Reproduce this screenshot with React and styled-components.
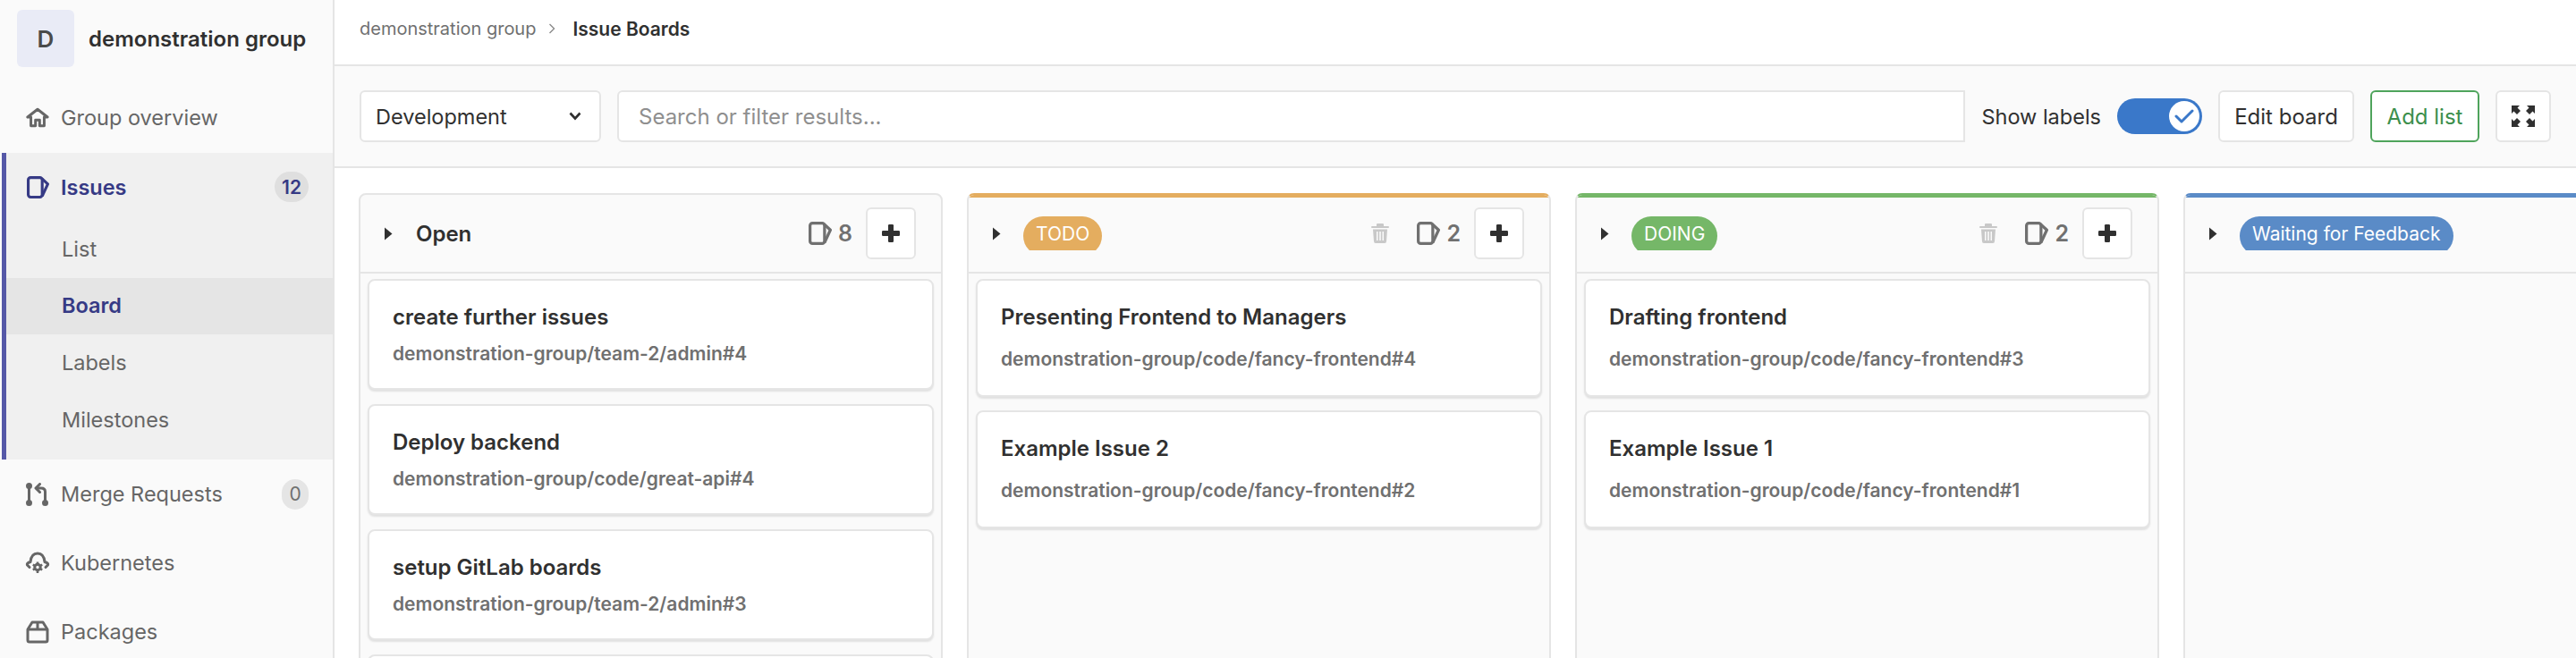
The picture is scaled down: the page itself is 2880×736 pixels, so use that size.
import React from 'react'
import styled, { createGlobalStyle } from 'styled-components'

const GlobalStyle = createGlobalStyle`
    html, body {
        margin: 0;
        padding: 0;
        height: 100%;
        overflow: hidden;
        background: #fff;
    }
    * {
        box-sizing: border-box;
    }
    body {
        font-family: Inter, "Noto Sans", sans-serif;
        color: #303030;
    }
`;

const IssueIcon = ({ size = 26 }) => (
    <svg width={size} height={size} viewBox="0 0 24 24" fill="none" stroke="currentColor" strokeWidth="3" strokeLinejoin="round">
        <rect x="1.5" y="1.5" width="15" height="21" rx="2.5"/>
        <path d="M16 2.5 L22.5 8.5 L16.5 21.5"/>
    </svg>
)

const HomeIcon = () => (
    <svg width="26" height="23" viewBox="0 0 28 24" fill="none" stroke="currentColor" strokeWidth="3.2" strokeLinejoin="round">
        <path d="M14 2 L2 11.5 H6 V22 H11.5 V15 H16.5 V22 H22 V11.5 H26 Z"/>
    </svg>
)

const MergeIcon = () => (
    <svg width="26" height="26" viewBox="0 0 26 26" fill="none" stroke="currentColor" strokeWidth="3" strokeLinecap="round" strokeLinejoin="round">
        <path d="M3.5 4 V22"/>
        <circle cx="3.5" cy="3.5" r="2" fill="currentColor"/>
        <circle cx="3.5" cy="22.5" r="2" fill="currentColor"/>
        <circle cx="21.5" cy="22.5" r="2" fill="currentColor"/>
        <path d="M21.5 22 V10 Q21.5 6 17 6 H12"/>
        <path d="M15.5 1.5 L11 6 L15.5 10.5"/>
    </svg>
)

const KubeIcon = () => (
    <svg width="28" height="26" viewBox="0 0 28 26" fill="none">
        <path d="M5 17.5 L2.5 15 Q2 13.5 3.5 12.5 L6 11.5 Q7 2 14 2 Q21 2 22 11.5 L24.5 12.5 Q26 13.5 25.5 15 L23 17.5" stroke="currentColor" strokeWidth="3" strokeLinecap="round" strokeLinejoin="round"/>
        <circle cx="14" cy="17.5" r="3.2" stroke="currentColor" strokeWidth="3"/>
        <path d="M14 11.5 V14 M14 21 V24 M8.8 14.5 L11 15.8 M17 19.2 L19.2 20.5 M8.8 20.5 L11 19.2 M17 15.8 L19.2 14.5" stroke="currentColor" strokeWidth="2.6"/>
    </svg>
)

const PackageIcon = () => (
    <svg width="26" height="26" viewBox="0 0 26 26" fill="none" stroke="currentColor" strokeWidth="3" strokeLinejoin="round">
        <path d="M7 2 H19 L24 10 V22 A2 2 0 0 1 22 24 H4 A2 2 0 0 1 2 22 V10 Z"/>
        <path d="M2 10 H24"/>
        <path d="M13 2 V10"/>
    </svg>
)

const TrashIcon = () => (
    <svg width="20" height="22" viewBox="0 0 20 22" fill="#c8c8c8">
        <path d="M7 0 H13 A1 1 0 0 1 14 1 V3 H19 A1 1 0 0 1 19 5 H1 A1 1 0 0 1 1 3 H6 V1 A1 1 0 0 1 7 0 Z"/>
        <path d="M2 6.5 H18 L17 20 A2 2 0 0 1 15 22 H5 A2 2 0 0 1 3 20 Z M6 9 V19 H7.5 V9 Z M9.2 9 V19 H10.8 V9 Z M12.5 9 V19 H14 V9 Z" fillRule="evenodd"/>
    </svg>
)

const PlusIcon = () => (
    <svg width="20" height="20" viewBox="0 0 20 20" fill="#303030">
        <rect x="7" y="0" width="6" height="20" rx="1.2"/>
        <rect x="0" y="7" width="20" height="6" rx="1.2"/>
    </svg>
)

const ExpandIcon = () => (
    <svg width="26" height="24" viewBox="0 0 26 24" fill="#303030">
        <path d="M0 0 H9 L6.5 2.5 L10 6 L6 10 L2.5 6.5 L0 9 Z"/>
        <path d="M26 0 H17 L19.5 2.5 L16 6 L20 10 L23.5 6.5 L26 9 Z"/>
        <path d="M0 24 H9 L6.5 21.5 L10 18 L6 14 L2.5 17.5 L0 15 Z"/>
        <path d="M26 24 H17 L19.5 21.5 L16 18 L20 14 L23.5 17.5 L26 15 Z"/>
    </svg>
)

const Triangle = () => (
    <svg width="9" height="15" viewBox="0 0 9 15" fill="#303030">
        <path d="M0 0.5 L8.5 7.5 L0 14.5 Z"/>
    </svg>
)

const columns = [
    {
        title: 'Open',
        count: 8,
        issues: [
            { title: 'create further issues', ref: 'demonstration-group/team-2/admin#4' },
            { title: 'Deploy backend', ref: 'demonstration-group/code/great-api#4' },
            { title: 'setup GitLab boards', ref: 'demonstration-group/team-2/admin#3' },
            { title: '', ref: '' },
        ],
    },
    {
        title: 'TODO',
        color: '#e4ad5f',
        count: 2,
        issues: [
            { title: 'Presenting Frontend to Managers', ref: 'demonstration-group/code/fancy-frontend#4' },
            { title: 'Example Issue 2', ref: 'demonstration-group/code/fancy-frontend#2' },
        ],
    },
    {
        title: 'DOING',
        color: '#75b768',
        count: 2,
        issues: [
            { title: 'Drafting frontend', ref: 'demonstration-group/code/fancy-frontend#3' },
            { title: 'Example Issue 1', ref: 'demonstration-group/code/fancy-frontend#1' },
        ],
    },
    {
        title: 'Waiting for Feedback',
        color: '#5a8bc7',
        bare: true,
        issues: [],
    },
]

const BoardColumn = ({ column }) => (
    <Column $color={column.color}>
        <ColumnHeader $color={column.color}>
            <Triangle />
            {column.color
                ? <LabelClip><LabelPill $color={column.color}>{column.title}</LabelPill></LabelClip>
                : <ColumnTitle>{column.title}</ColumnTitle>}
            {!column.bare && (
                <HeaderActions>
                    {column.color && <TrashSlot><TrashIcon /></TrashSlot>}
                    <CountIcon><IssueIcon /></CountIcon>
                    <Count>{column.count}</Count>
                    <PlusButton><PlusIcon /></PlusButton>
                </HeaderActions>
            )}
        </ColumnHeader>
        <CardList $roomy={!!column.color}>
            {column.issues.map((issue, i) => (
                <Card key={i} $roomy={!!column.color}>
                    <CardTitle>{issue.title}</CardTitle>
                    <CardRef $roomy={!!column.color}>{issue.ref}</CardRef>
                </Card>
            ))}
        </CardList>
    </Column>
)

const App = () => {
    return (
        <Page>
            <GlobalStyle />
            <Sidebar>
                <GroupHeader>
                    <Avatar>D</Avatar>
                    <GroupName>demonstration group</GroupName>
                </GroupHeader>
                <NavRow $first>
                    <NavIcon><HomeIcon /></NavIcon>
                    Group overview
                </NavRow>
                <ActiveSection>
                    <SectionRow>
                        <NavIcon><IssueIcon size={25}/></NavIcon>
                        Issues
                        <Badge $active>12</Badge>
                    </SectionRow>
                    <SubRow>List</SubRow>
                    <SubRow $current>Board</SubRow>
                    <SubRow>Labels</SubRow>
                    <SubRow>Milestones</SubRow>
                </ActiveSection>
                <NavRow>
                    <NavIcon><MergeIcon /></NavIcon>
                    Merge Requests
                    <Badge>0</Badge>
                </NavRow>
                <NavRow>
                    <NavIcon><KubeIcon /></NavIcon>
                    Kubernetes
                </NavRow>
                <NavRow>
                    <NavIcon><PackageIcon /></NavIcon>
                    Packages
                </NavRow>
            </Sidebar>
            <Main>
                <TopBar>
                    <Crumb>demonstration group</Crumb>
                    <svg width="8" height="12" viewBox="0 0 8 12" fill="none" stroke="#8a8a8a" strokeWidth="1.4">
                        <path d="M1.5 1 L6.5 6 L1.5 11"/>
                    </svg>
                    <CrumbCurrent>Issue Boards</CrumbCurrent>
                </TopBar>
                <FilterBar>
                    <BoardSelect>
                        Development
                        <svg width="14" height="10" viewBox="0 0 14 10" fill="none" stroke="#303030" strokeWidth="2.6">
                            <path d="M1.5 1.5 L7 7.5 L12.5 1.5"/>
                        </svg>
                    </BoardSelect>
                    <SearchBox>Search or filter results...</SearchBox>
                    <ShowLabels>Show labels</ShowLabels>
                    <Toggle>
                        <Knob>
                            <svg width="22" height="16" viewBox="0 0 22 16" fill="none" stroke="#3a78c9" strokeWidth="3" strokeLinecap="round" strokeLinejoin="round">
                                <path d="M2 8 L8 14 L20 2"/>
                            </svg>
                        </Knob>
                    </Toggle>
                    <BarButton $width={152}>Edit board</BarButton>
                    <BarButton $width={122} $green>Add list</BarButton>
                    <IconButton><ExpandIcon /></IconButton>
                </FilterBar>
                <Board>
                    {columns.map(c => <BoardColumn key={c.title} column={c}/>)}
                </Board>
            </Main>
        </Page>
    )
}

const Page = styled.div`
    display: flex;
    width: 2880px;
    height: 736px;
    overflow: hidden;
`;

const Sidebar = styled.nav`
    flex: 0 0 374px;
    height: 736px;
    background: #fafafa;
    border-right: 2px solid #e5e5e5;
    overflow: hidden;
`;

const GroupHeader = styled.div`
    display: flex;
    align-items: center;
    gap: 16px;
    height: 86px;
    padding: 0 0 0 19px;
`;

const Avatar = styled.div`
    display: flex;
    align-items: center;
    justify-content: center;
    width: 64px;
    height: 64px;
    border-radius: 6px;
    background: #e9ebf6;
    color: #4a4a4a;
    font-size: 26px;
    font-weight: 600;
`;

const GroupName = styled.div`
    font-size: 24px;
    font-weight: 600;
    color: #303030;
    white-space: nowrap;
`;

const NavIcon = styled.span`
    display: flex;
    align-items: center;
    justify-content: center;
    width: 28px;
    height: 28px;
    margin-right: 12px;
`;

const NavRow = styled.div`
    display: flex;
    align-items: center;
    height: ${p => p.$first ? 85 : 77}px;
    padding: ${p => p.$first ? 5 : 0}px 27px 0 28px;
    color: #666;
    font-size: 23.5px;
    white-space: nowrap;
`;

const ActiveSection = styled.div`
    height: 343px;
    margin-left: 2px;
    background: #f0f0f0;
    border-left: 5px solid #5558a7;
`;

const SectionRow = styled.div`
    display: flex;
    align-items: center;
    height: 76px;
    padding: 0 27px 0 21px;
    color: #363a85;
    font-size: 23.5px;
    font-weight: 600;
`;

const SubRow = styled.div`
    display: flex;
    align-items: center;
    height: ${p => p.$current ? 63 : 64}px;
    padding: 0 0 2px 62px;
    font-size: 23.5px;
    font-weight: ${p => p.$current ? 600 : 400};
    color: ${p => p.$current ? '#363a85' : '#666'};
    background: ${p => p.$current ? '#e5e5e5' : 'transparent'};
`;

const Badge = styled.span`
    display: flex;
    align-items: center;
    justify-content: center;
    margin-left: auto;
    min-width: 30px;
    height: 34px;
    padding: 0 8px;
    border-radius: 17px;
    background: ${p => p.$active ? '#dfdfdf' : '#e5e5e5'};
    color: ${p => p.$active ? '#363a85' : '#707070'};
    font-size: 21px;
    font-weight: ${p => p.$active ? 600 : 400};
`;

const Main = styled.main`
    flex: 1;
    min-width: 0;
    display: flex;
    flex-direction: column;
    height: 736px;
`;

const TopBar = styled.div`
    display: flex;
    align-items: center;
    flex: 0 0 74px;
    padding: 0 0 8px 28px;
    border-bottom: 2px solid #e5e5e5;
    background: #fff;
`;

const Crumb = styled.span`
    font-size: 20px;
    color: #707070;
    margin-right: 14px;
`;

const CrumbCurrent = styled.span`
    font-size: 21px;
    font-weight: 600;
    color: #303030;
    margin-left: 19px;
`;

const FilterBar = styled.div`
    display: flex;
    align-items: center;
    flex: 0 0 114px;
    padding: 0 28px;
    background: #fafafa;
    border-bottom: 2px solid #e5e5e5;
`;

const BoardSelect = styled.div`
    display: flex;
    align-items: center;
    justify-content: space-between;
    flex: 0 0 270px;
    height: 58px;
    padding: 0 20px 0 16px;
    background: #fff;
    border: 2px solid #e5e5e5;
    border-radius: 6px;
    font-size: 23.5px;
    color: #303030;
`;

const SearchBox = styled.div`
    display: flex;
    align-items: center;
    flex: 1;
    height: 58px;
    margin-left: 18px;
    padding: 0 22px;
    background: #fff;
    border: 2px solid #e5e5e5;
    border-radius: 6px 0 0 6px;
    font-size: 24px;
    color: #8f8f8f;
`;

const ShowLabels = styled.span`
    margin-left: 18px;
    font-size: 23.5px;
    color: #303030;
    white-space: nowrap;
`;

const Toggle = styled.div`
    display: flex;
    align-items: center;
    justify-content: flex-end;
    flex: 0 0 95px;
    height: 40px;
    margin-left: 18px;
    padding-right: 3px;
    border-radius: 20px;
    background: #3a78c9;
`;

const Knob = styled.span`
    display: flex;
    align-items: center;
    justify-content: center;
    width: 34px;
    height: 34px;
    border-radius: 50%;
    background: #fff;
`;

const BarButton = styled.div`
    display: flex;
    align-items: center;
    justify-content: center;
    flex: 0 0 ${p => p.$width}px;
    height: 58px;
    margin-left: 18px;
    background: #fff;
    border: 2px solid ${p => p.$green ? '#4fa45c' : '#e5e5e5'};
    border-radius: 6px;
    font-size: 24px;
    color: ${p => p.$green ? '#3c8f4c' : '#303030'};
    white-space: nowrap;
`;

const IconButton = styled.div`
    display: flex;
    align-items: center;
    justify-content: center;
    flex: 0 0 62px;
    height: 58px;
    margin-left: 18px;
    background: #fff;
    border: 2px solid #e5e5e5;
    border-radius: 6px;
`;

const Board = styled.div`
    display: flex;
    gap: 27px;
    flex: 1;
    min-height: 0;
    padding: 28px 0 0 27px;
    overflow: hidden;
`;

const Column = styled.section`
    flex: 0 0 653px;
    height: 600px;
    background: #fafafa;
    border: 2px solid #e5e5e5;
    border-top-color: ${p => p.$color || '#e5e5e5'};
    border-radius: 8px 8px 0 0;
    overflow: hidden;
`;

const ColumnHeader = styled.header`
    display: flex;
    align-items: center;
    height: 88px;
    padding: 0 28px 0 27px;
    border-bottom: 2px solid #e5e5e5;
    box-shadow: ${p => p.$color ? `inset 0 3px 0 ${p.$color}` : 'none'};
`;

const ColumnTitle = styled.span`
    margin-left: 26px;
    font-size: 24px;
    font-weight: 600;
    color: #303030;
`;

const LabelClip = styled.div`
    height: 38px;
    margin-left: 25px;
    overflow: hidden;
`;

const LabelPill = styled.span`
    display: flex;
    align-items: center;
    height: 44px;
    padding: 0 14px 6px;
    border-radius: 22px;
    background: ${p => p.$color};
    color: #fff;
    font-size: 21px;
    white-space: nowrap;
`;

const HeaderActions = styled.div`
    display: flex;
    align-items: center;
    margin-left: auto;
`;

const TrashSlot = styled.span`
    display: flex;
    margin-right: 31px;
`;

const CountIcon = styled.span`
    display: flex;
    color: #707070;
    margin-right: 7px;
`;

const Count = styled.span`
    font-size: 25px;
    font-weight: 600;
    color: #707070;
    margin-right: 15px;
`;

const PlusButton = styled.div`
    display: flex;
    align-items: center;
    justify-content: center;
    width: 56px;
    height: 58px;
    background: #fff;
    border: 2px solid #e5e5e5;
    border-radius: 6px;
`;

const CardList = styled.div`
    display: flex;
    flex-direction: column;
    gap: ${p => p.$roomy ? 15 : 16}px;
    padding: 6px 8px 0 8px;
`;

const Card = styled.article`
    flex: 0 0 ${p => p.$roomy ? 132 : 124}px;
    padding: 27px 26px 0;
    background: #fff;
    border: 2px solid #e5e5e5;
    border-radius: 8px;
    box-shadow: 0 2px 2px rgba(0, 0, 0, 0.1);
`;

const CardTitle = styled.div`
    font-size: 24px;
    line-height: 28px;
    font-weight: 600;
    color: #303030;
`;

const CardRef = styled.div`
    margin-top: ${p => p.$roomy ? 20 : 14}px;
    font-size: 21px;
    line-height: 26px;
    font-weight: 600;
    color: #707070;
`;

export default App
